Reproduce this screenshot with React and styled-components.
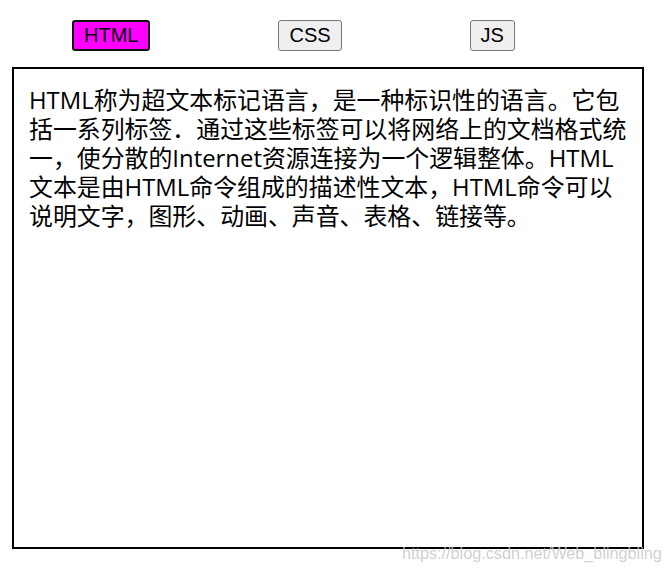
import React, { useState } from 'react';
import styled, { createGlobalStyle } from 'styled-components';

const GlobalStyle = createGlobalStyle`
    body {
        margin: 0;
        background: #ffffff;
        font-family: "Liberation Sans", Arial, sans-serif;
    }
`;

const tabs = [
    {
        key: 'HTML',
        text: 'HTML称为超文本标记语言，是一种标识性的语言。它包括一系列标签．通过这些标签可以将网络上的文档格式统一，使分散的Internet资源连接为一个逻辑整体。HTML文本是由HTML命令组成的描述性文本，HTML命令可以说明文字，图形、动画、声音、表格、链接等。',
    },
    { key: 'CSS', text: 'CSS是层叠样式表，用来表现HTML或XML等文件样式的计算机语言。' },
    { key: 'JS', text: 'JavaScript是一种具有函数优先的轻量级，解释型或即时编译型的编程语言。' },
];

const App = () => {
    const [active, setActive] = useState('HTML');
    const current = tabs.find(t => t.key === active);
    return (
        <Page>
            <GlobalStyle />
            <TabBar>
                {tabs.map(t => (
                    <TabButton key={t.key} $active={t.key === active} onClick={() => setActive(t.key)}>
                        {t.key}
                    </TabButton>
                ))}
            </TabBar>
            <Panel>
                <Content>{current.text}</Content>
            </Panel>
            <Watermark>https://blog.csdn.net/Web_blingbling</Watermark>
        </Page>
    );
};

export default App;

const Page = styled.div`
    position: relative;
    width: 669px;
    height: 573px;
    padding-top: 20px;
    box-sizing: border-box;
`;

const TabBar = styled.div`
    display: flex;
    gap: 128px;
    padding-left: 72px;
    height: 31px;
`;

const TabButton = styled.button`
    height: 31px;
    padding: 0 10px;
    font-family: "Liberation Sans", Arial, sans-serif;
    font-size: 20px;
    color: #000000;
    border-radius: 3px;
    background: ${p => (p.$active ? '#ff00ff' : '#efefef')};
    border: ${p => (p.$active ? '2px solid #111111' : '1px solid #767676')};
    cursor: pointer;
`;

const Panel = styled.div`
    margin: 16px 0 0 12px;
    width: 632px;
    height: 482px;
    border: 2px solid #000000;
    box-sizing: border-box;
    padding: 16px 12px 0 15px;
`;

const Content = styled.p`
    margin: 0;
    font-family: "Open Sans", "Noto Sans CJK SC", sans-serif;
    font-size: 23.9px;
    line-height: 29px;
    color: #000000;
`;

const Watermark = styled.div`
    position: absolute;
    left: 402px;
    top: 544px;
    font-family: "Liberation Sans", Arial, sans-serif;
    font-size: 16.2px;
    color: rgba(200, 200, 200, 0.85);
    pointer-events: none;
`;
